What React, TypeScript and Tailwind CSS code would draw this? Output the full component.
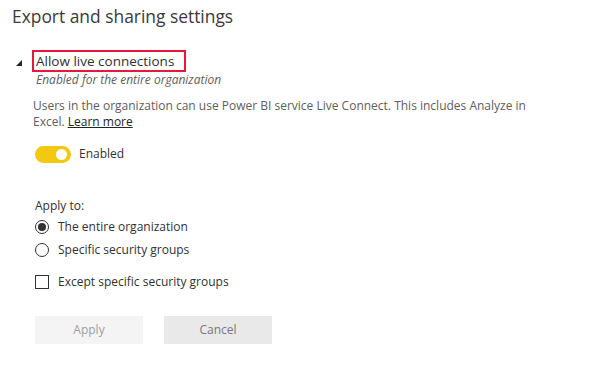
export default function App() {
  return (
    <div className="w-[616px] h-[367px] bg-white text-[#323130] overflow-hidden" style={{ fontFamily: '"Open Sans", "Noto Sans", sans-serif' }}>
      <div className="pl-[12px] pt-[5px]">
        <h1 className="text-[17.4px] leading-[23px] text-[#3b3a39]">Export and sharing settings</h1>

        <div className="mt-[22px] flex items-start">
          {/* collapse caret */}
          <svg width="8" height="8" viewBox="0 0 8 8" className="mt-[9px] ml-[3px] shrink-0">
            <path d="M7 1 L7 7 L1 7 Z" fill="#252423" />
          </svg>
          <div className="ml-[9px]">
            <div className="border-2 border-[#e8173e] w-[154px] h-[22px] pl-[2px] flex items-center">
              <span className="text-[13.5px] leading-[18px]">Allow live connections</span>
            </div>
            <div className="pl-[4px] text-[12px] leading-[15px] italic text-[#605e5c]">Enabled for the entire organization</div>
          </div>
        </div>

        <div className="pl-[21px] mt-[11px] text-[12px] leading-[16px] text-[#605e5c]">
          <div>Users in the organization can use Power BI service Live Connect. This includes Analyze in</div>
          <div>
            Excel. <a className="text-[#252423] underline">Learn more</a>
          </div>
        </div>

        <div className="pl-[23px] mt-[15px] flex items-center">
          <div className="w-[36px] h-[17px] rounded-full bg-[#f2c811] flex items-center justify-end pr-[4px]">
            <div className="w-[11px] h-[11px] rounded-full bg-white" />
          </div>
          <span className="ml-[8px] text-[12px] text-[#323130]">Enabled</span>
        </div>

        <div className="pl-[23px] mt-[35px] text-[12px] leading-[16px] text-[#323130]">Apply to:</div>

        <div className="pl-[23px] mt-[4px] flex flex-col gap-[5px] text-[12px]">
          <label className="flex items-center gap-[9px]">
            <span className="w-[14px] h-[14px] rounded-full border border-[#323130] flex items-center justify-center">
              <span className="w-[8px] h-[8px] rounded-full bg-[#323130]" />
            </span>
            The entire organization
          </label>
          <label className="flex items-center gap-[9px]">
            <span className="w-[14px] h-[14px] rounded-full border border-[#323130]" />
            Specific security groups
          </label>
        </div>

        <label className="pl-[23px] mt-[14px] flex items-center gap-[9px] text-[12px]">
          <span className="w-[14px] h-[14px] border border-[#323130]" />
          Except specific security groups
        </label>

        <div className="pl-[23px] mt-[25px] flex gap-[21px]">
          <button className="w-[108px] h-[28px] bg-[#f4f4f4] text-[12px] text-[#a19f9d]">Apply</button>
          <button className="w-[108px] h-[28px] bg-[#e9e9e9] text-[12px] text-[#7a7877]">Cancel</button>
        </div>
      </div>
    </div>
  );
}
